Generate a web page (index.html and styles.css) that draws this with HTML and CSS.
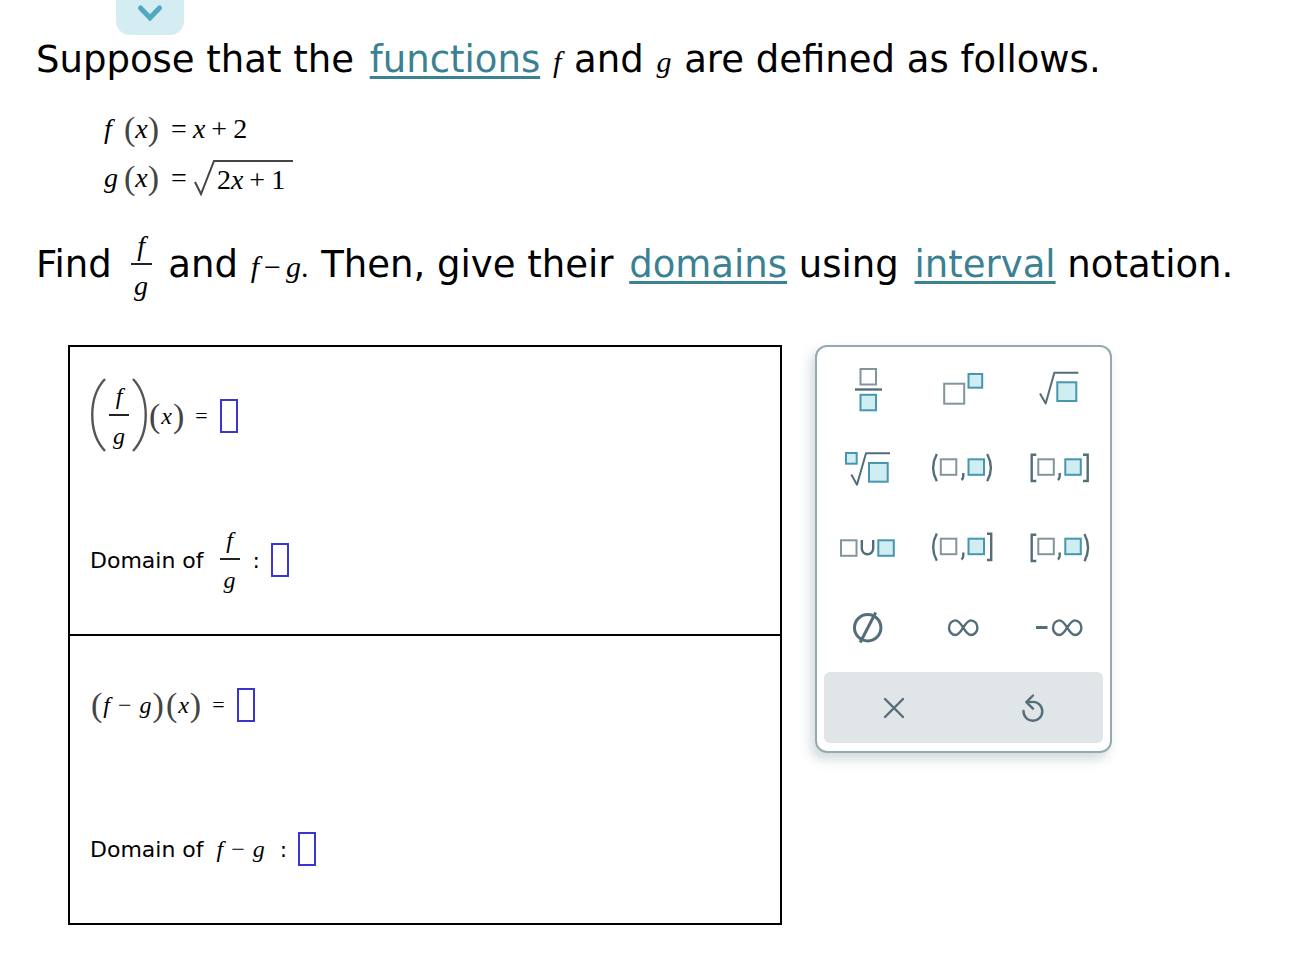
FILE: index.html
```html
<!DOCTYPE html>
<html lang="en">
<head>
<meta charset="utf-8">
<title>Quotient and difference of functions</title>
<link rel="stylesheet" href="styles.css">
</head>
<body>
<button class="drop-tab" type="button" aria-label="Expand">
  <svg width="28" height="20" viewBox="0 0 28 20"><path d="M4.500 5L14 14.800L23.500 5" fill="none" stroke="#51a9c1" stroke-width="5" stroke-linecap="round"/></svg>
</button>
<main class="page">
  <p class="prompt">Suppose that the <a href="#functions">functions</a> <i class="math">f</i> and <i class="math">g</i> are defined as follows.</p>

  <div class="equations">
    <div class="equation"><i class="fn">f</i><span class="paren">(</span><i>x</i><span class="paren">)</span><span class="eq">=</span><i>x</i><span class="op">+</span>2</div>
    <div class="equation"><i class="fn">g</i><span class="paren">(</span><i>x</i><span class="paren">)</span><span class="eq">=</span><svg class="radical" width="24" height="40" viewBox="0 0 24 40"><path d="M2 24L8 36L21 3H24" fill="none" stroke="#444" stroke-width="2"/></svg><span class="radicand">2<i>x</i><span class="op">+</span>1</span></div>
  </div>

  <p class="prompt prompt-task">Find <span class="frac"><i>f</i><i>g</i></span> and <span class="math"><i>f</i><span class="dash">−</span><i>g</i>.</span> Then, give their <a href="#domains">domains</a> using <a href="#interval">interval</a> notation.</p>

  <div class="work">
    <form class="answers">
      <section class="part">
        <label class="answer" for="quotient">
          <svg width="17" height="76" viewBox="0 0 17 76"><path d="M15 1C-2 19 -2 55 15 73" fill="none" stroke="#555" stroke-width="2.400"/></svg>
          <span class="frac frac-small"><i>f</i><i>g</i></span>
          <svg width="17" height="76" viewBox="0 0 17 76"><path d="M2 1C19 19 19 55 2 73" fill="none" stroke="#555" stroke-width="2.400"/></svg>
          <span class="paren">(</span><i>x</i><span class="paren">)</span><span class="equals">=</span>
          <input class="blank" id="quotient" type="text">
        </label>
        <label class="answer" for="quotient-domain">
          <span class="words">Domain of</span>
          <span class="frac frac-small frac-spaced"><i>f</i><i>g</i></span>
          <span class="words colon">:</span>
          <input class="blank" id="quotient-domain" type="text">
        </label>
      </section>
      <section class="part">
        <label class="answer" for="difference">
          <span class="paren">(</span><i>f</i><span class="minus">−</span><i>g</i><span class="paren">)</span><span class="paren">(</span><i>x</i><span class="paren">)</span><span class="equals">=</span>
          <input class="blank" id="difference" type="text">
        </label>
        <label class="answer" for="difference-domain">
          <span class="words">Domain of</span><span class="expr"><i>f</i><span class="minus">−</span><i>g</i></span>
          <span class="words colon">:</span>
          <input class="blank" id="difference-domain" type="text">
        </label>
      </section>
    </form>

    <aside class="keypad" aria-label="Math symbols">
      <div class="keys">
        <button class="key" type="button" aria-label="Fraction"><svg class="icon" viewBox="0 0 72 48"><rect class="box" x="28.500" y="5" width="15.500" height="15.500"/><path class="pen" d="M23 25.500H50"/><rect class="fill" x="28.500" y="30.800" width="15.500" height="15.500"/></svg></button>
        <button class="key" type="button" aria-label="Exponent"><svg class="icon" viewBox="0 0 72 48"><rect class="box" x="17.200" y="19.700" width="20" height="20"/><rect class="fill" x="41.500" y="10" width="13.700" height="13.700"/></svg></button>
        <button class="key" type="button" aria-label="Square root"><svg class="icon" viewBox="0 0 72 48"><path class="pen thin" d="M17 29.500L22.700 39.500L31.300 8.700H55.300"/><rect class="fill" x="34.300" y="18.300" width="19" height="18.700"/></svg></button>
        <button class="key" type="button" aria-label="Root"><svg class="icon" viewBox="0 0 72 48"><rect class="fill" x="14" y="9" width="10.700" height="10.700"/><path class="pen thin" d="M19.300 30.500L25 40.700L34 9.300H58"/><rect class="fill" x="37" y="19" width="18.700" height="18.700"/></svg></button>
        <button class="key" type="button" aria-label="Open interval"><svg class="icon" viewBox="0 0 72 48"><path class="pen" d="M9.800 10Q2.500 23.700 9.800 37.300M60.200 10Q67.500 23.700 60.200 37.300"/><rect class="box" x="13.800" y="15.300" width="15.500" height="15.500"/><path class="pen" d="M36.300 29V32Q36.300 34.500 34.500 36"/><rect class="fill" x="41.500" y="15.300" width="15.500" height="15.500"/></svg></button>
        <button class="key" type="button" aria-label="Closed interval"><svg class="icon" viewBox="0 0 72 48"><path class="pen" d="M13.300 10.700H8.700V37H13.300M60 10.700H64.700V37H60"/><rect class="box" x="15.300" y="15.300" width="15.500" height="15.500"/><path class="pen" d="M36.700 29V32Q36.700 34.500 34.900 36"/><rect class="fill" x="42.300" y="15.300" width="15.500" height="15.500"/></svg></button>
        <button class="key" type="button" aria-label="Union"><svg class="icon" viewBox="0 0 72 48"><rect class="box" x="9" y="16.300" width="15.500" height="15.500"/><path class="pen" d="M29.800 16V24.500a5.700 5.700 0 0 0 11.400 0V16"/><rect class="fill" x="46.300" y="16.300" width="15.500" height="15.500"/></svg></button>
        <button class="key" type="button" aria-label="Left open interval"><svg class="icon" viewBox="0 0 72 48"><path class="pen" d="M9.800 9.500Q2.500 23.200 9.800 36.800M60 9.700H64.200V36H60"/><rect class="box" x="13.800" y="14.700" width="15.500" height="15.500"/><path class="pen" d="M36.300 28.500V31.500Q36.300 34 34.500 35.500"/><rect class="fill" x="41.500" y="14.700" width="15.500" height="15.500"/></svg></button>
        <button class="key" type="button" aria-label="Right open interval"><svg class="icon" viewBox="0 0 72 48"><path class="pen" d="M13.300 10.700H8.700V37H13.300M61.500 10Q68.500 23.700 61.500 37.300"/><rect class="box" x="15.300" y="14.700" width="15.500" height="15.500"/><path class="pen" d="M36.700 28.500V31.500Q36.700 34 34.900 35.500"/><rect class="fill" x="42.300" y="14.700" width="15.500" height="15.500"/></svg></button>
        <button class="key" type="button" aria-label="Empty set"><svg class="icon" viewBox="0 0 72 48"><circle class="pen bold" cx="35.700" cy="23.700" r="13.200"/><path class="pen bold" d="M28.200 38.500L43.700 8.500"/></svg></button>
        <button class="key" type="button" aria-label="Infinity"><svg class="icon" viewBox="0 0 72 48"><path class="pen" d="M36.200 23.700C33 18.500 31 16.400 28.500 16.400a6.500 7.300 0 0 0 0 14.600C31 31 33 28.900 36.200 23.700S41.400 16.400 43.900 16.400a6.500 7.300 0 0 1 0 14.600C41.400 31 39.400 28.900 36.200 23.700Z"/></svg></button>
        <button class="key" type="button" aria-label="Negative infinity"><svg class="icon" viewBox="0 0 72 48"><path class="pen bold" d="M13 23.500H24.500"/><path class="pen" d="M44.200 23.700C41 18.500 39 16.400 36.500 16.400a6.500 7.300 0 0 0 0 14.600C39 31 41 28.900 44.200 23.700S49.400 16.400 51.900 16.400a6.500 7.300 0 0 1 0 14.600C49.400 31 47.400 28.900 44.200 23.700Z"/></svg></button>
      </div>
      <div class="actions">
        <button class="action" type="button" aria-label="Clear"><svg width="32" height="32" viewBox="0 0 32 32"><path class="pen round" d="M7 7L25 25M25 7L7 25"/></svg></button>
        <button class="action" type="button" aria-label="Undo"><svg width="32" height="32" viewBox="0 0 32 32"><path class="pen round" d="M6.500 19a9.400 9.400 0 1 0 9.400-9.100C13.500 9.900 11.500 10 9.500 10.200M16 3.500L9.300 10.200L16 16.600"/></svg></button>
      </div>
    </aside>
  </div>
</main>
</body>
</html>
```
FILE: styles.css
```css
* { box-sizing: border-box; }
body {
  margin: 0;
  background: #fff;
  color: #000;
  font-family: "DejaVu Sans", Verdana, sans-serif;
}
button {
  border: 0;
  padding: 0;
  background: none;
  cursor: pointer;
}
svg { display: block; flex: none; }

.drop-tab {
  display: flex;
  justify-content: center;
  align-items: flex-start;
  width: 68px;
  height: 35px;
  margin-left: 116px;
  padding-top: 3px;
  border-radius: 0 0 14px 14px;
  background: #d3edf2;
}

.page { padding: 1px 36px 28px; }
.prompt {
  margin: 0;
  font-size: 37px;
  line-height: 48px;
}
.prompt a {
  margin-left: 4px;
  color: #3a8193;
  text-decoration-thickness: 3px;
  text-underline-offset: 4px;
}
.math, .frac, .equations, .answer { font-family: "Liberation Serif", "Times New Roman", serif; }
.math { margin: 0 1px; font-size: 30px; }
.dash { margin: 0 5px; }

.equations {
  padding: 18px 0 27px 68px;
  font-size: 28px;
}
.equation { display: flex; align-items: center; height: 49px; }
.fn { width: 20px; }
.paren { font-size: 34px; line-height: 32px; color: #444; }
.eq { margin: 0 6px 0 12px; }
.op { margin: 0 6px; }
.radical { width: 24px; }
.radicand {
  height: 36px;
  padding: 0 8px 0 0;
  border-top: 2px solid #444;
  line-height: 36px;
}

.frac {
  display: inline-flex;
  flex-direction: column;
  align-items: center;
  vertical-align: middle;
  width: 21px;
  margin: 0 5px 0 7px;
  font-size: 28px;
  line-height: 34px;
}
.frac i:first-child { width: 100%; border-bottom: 2px solid #222; text-align: center; }
.frac i:last-child { padding-top: 4px; }
.frac-small { width: 20px; font-size: 24px; line-height: 36px; margin: 0 2px; }
.frac-small i:last-child { padding-top: 2px; }
.frac-spaced { margin: 0 13px 0 16px; }

.work {
  display: flex;
  align-items: flex-start;
  gap: 33px;
  padding: 42px 160px 0 32px;
}
.answers { flex: 1; border: 2px solid #000; }
.part { padding: 20px 20px 25px; }
.part + .part { border-top: 2px solid #000; }
.answer { display: flex; align-items: center; height: 98px; font-size: 24px; }
.answer + .answer { margin-top: 46px; }
.answer .paren { margin: 0 1px; }
.words { font-family: "DejaVu Sans", Verdana, sans-serif; font-size: 22px; }
.equals { margin: 0 12px 0 10px; font-size: 22px; }
.minus { margin: 0 8px; }
.expr { margin: 0 15px 0 13px; }
.colon { margin-right: 11px; }
.blank {
  width: 18px;
  height: 34px;
  padding: 0;
  border: 2px solid #3a35cc;
  background: #fff;
}

.keypad {
  width: 297px;
  padding: 1px 7px 8px;
  border: 2px solid #94a9b0;
  border-radius: 12px;
  box-shadow: -4px 6px 12px rgba(70, 100, 115, 0.25);
}
.keys { display: grid; grid-template-columns: repeat(3, 1fr); margin: 0 -4px 4px; }
.key { display: flex; justify-content: center; align-items: center; height: 80px; }
.icon { width: 72px; height: 48px; }
.box { fill: #fff; stroke: #82959b; stroke-width: 2; }
.fill { fill: #d0edf2; stroke: #4797ae; stroke-width: 2; }
.pen { fill: none; stroke: #546e79; stroke-width: 2.4; }
.thin { stroke-width: 2; stroke-linejoin: round; }
.bold { stroke-width: 3; }
.round { stroke-linecap: round; stroke-linejoin: round; }
.actions { display: grid; grid-template-columns: 1fr 1fr; border-radius: 6px; background: #e0e5e8; }
.action { display: flex; justify-content: center; align-items: center; height: 71px; }
```
